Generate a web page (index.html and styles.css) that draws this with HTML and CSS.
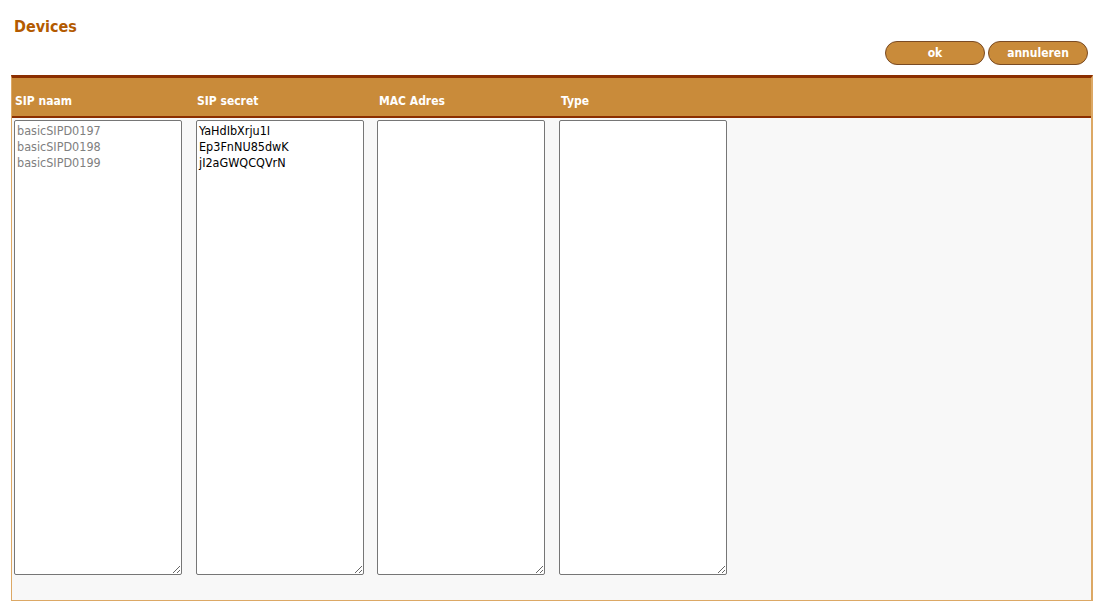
FILE: index.html
```html
<!DOCTYPE html>
<html lang="nl">
<head>
    <meta charset="UTF-8">
    <title>Devices</title>
    <link rel="stylesheet" href="styles.css">
</head>
<body>
    <h2 class="page-title">Devices</h2>

    <div class="actions">
        <button type="button" class="btn">ok</button>
        <button type="button" class="btn">annuleren</button>
    </div>

    <div class="panel">
        <div class="panel-head">
            <div class="col-label">SIP naam</div>
            <div class="col-label">SIP secret</div>
            <div class="col-label">MAC Adres</div>
            <div class="col-label">Type</div>
        </div>
        <div class="panel-body">
            <textarea class="field field-readonly" readonly>basicSIPD0197
basicSIPD0198
basicSIPD0199</textarea>
            <textarea class="field">YaHdIbXrju1I
Ep3FnNU85dwK
jI2aGWQCQVrN</textarea>
            <textarea class="field"></textarea>
            <textarea class="field"></textarea>
        </div>
    </div>
</body>
</html>
```

FILE: styles.css
```css
* {
    box-sizing: border-box;
}

body {
    margin: 0;
    padding: 0 10px 0 11px;
    font-family: "DejaVu Sans Condensed", "DejaVu Sans", Verdana, sans-serif;
    background: #fff;
}

.page-title {
    margin: 0;
    padding: 17px 0 0 3px;
    height: 41px;
    font-size: 16px;
    font-weight: bold;
    color: #b35a00;
}

.actions {
    display: flex;
    justify-content: flex-end;
    gap: 3px;
    padding-right: 5px;
    height: 34px;
}

.btn {
    width: 100px;
    height: 24px;
    padding: 0;
    background: #c98b3a;
    border: 1px solid #7a4b24;
    border-radius: 12px;
    color: #fff;
    font-family: inherit;
    font-size: 12px;
    font-weight: bold;
    cursor: pointer;
}

.panel {
    border: 1px solid #dca865;
    border-right-width: 2px;
    border-top: 3px solid #8b2e00;
    background: #f8f8f8;
}

.panel-head {
    display: grid;
    grid-template-columns: repeat(4, 182px);
    height: 40px;
    padding: 16px 0 0 3px;
    background: #c98b3a;
    border-bottom: 2px solid #8b2e00;
}

.col-label {
    color: #fff;
    font-size: 12px;
    font-weight: bold;
}

.panel-body {
    display: grid;
    grid-template-columns: 182px 181px 182px 182px;
    padding: 2px 0 25px 2px;
}

.field {
    width: 168px;
    height: 455px;
    margin: 0;
    padding: 2px;
    background: #fff;
    border: 1px solid #767676;
    border-radius: 2px;
    color: #000;
    font-family: "DejaVu Sans Condensed", "DejaVu Sans", Verdana, sans-serif;
    font-size: 12.5px;
    line-height: 16px;
}

.field-readonly {
    color: #808080;
}
```
